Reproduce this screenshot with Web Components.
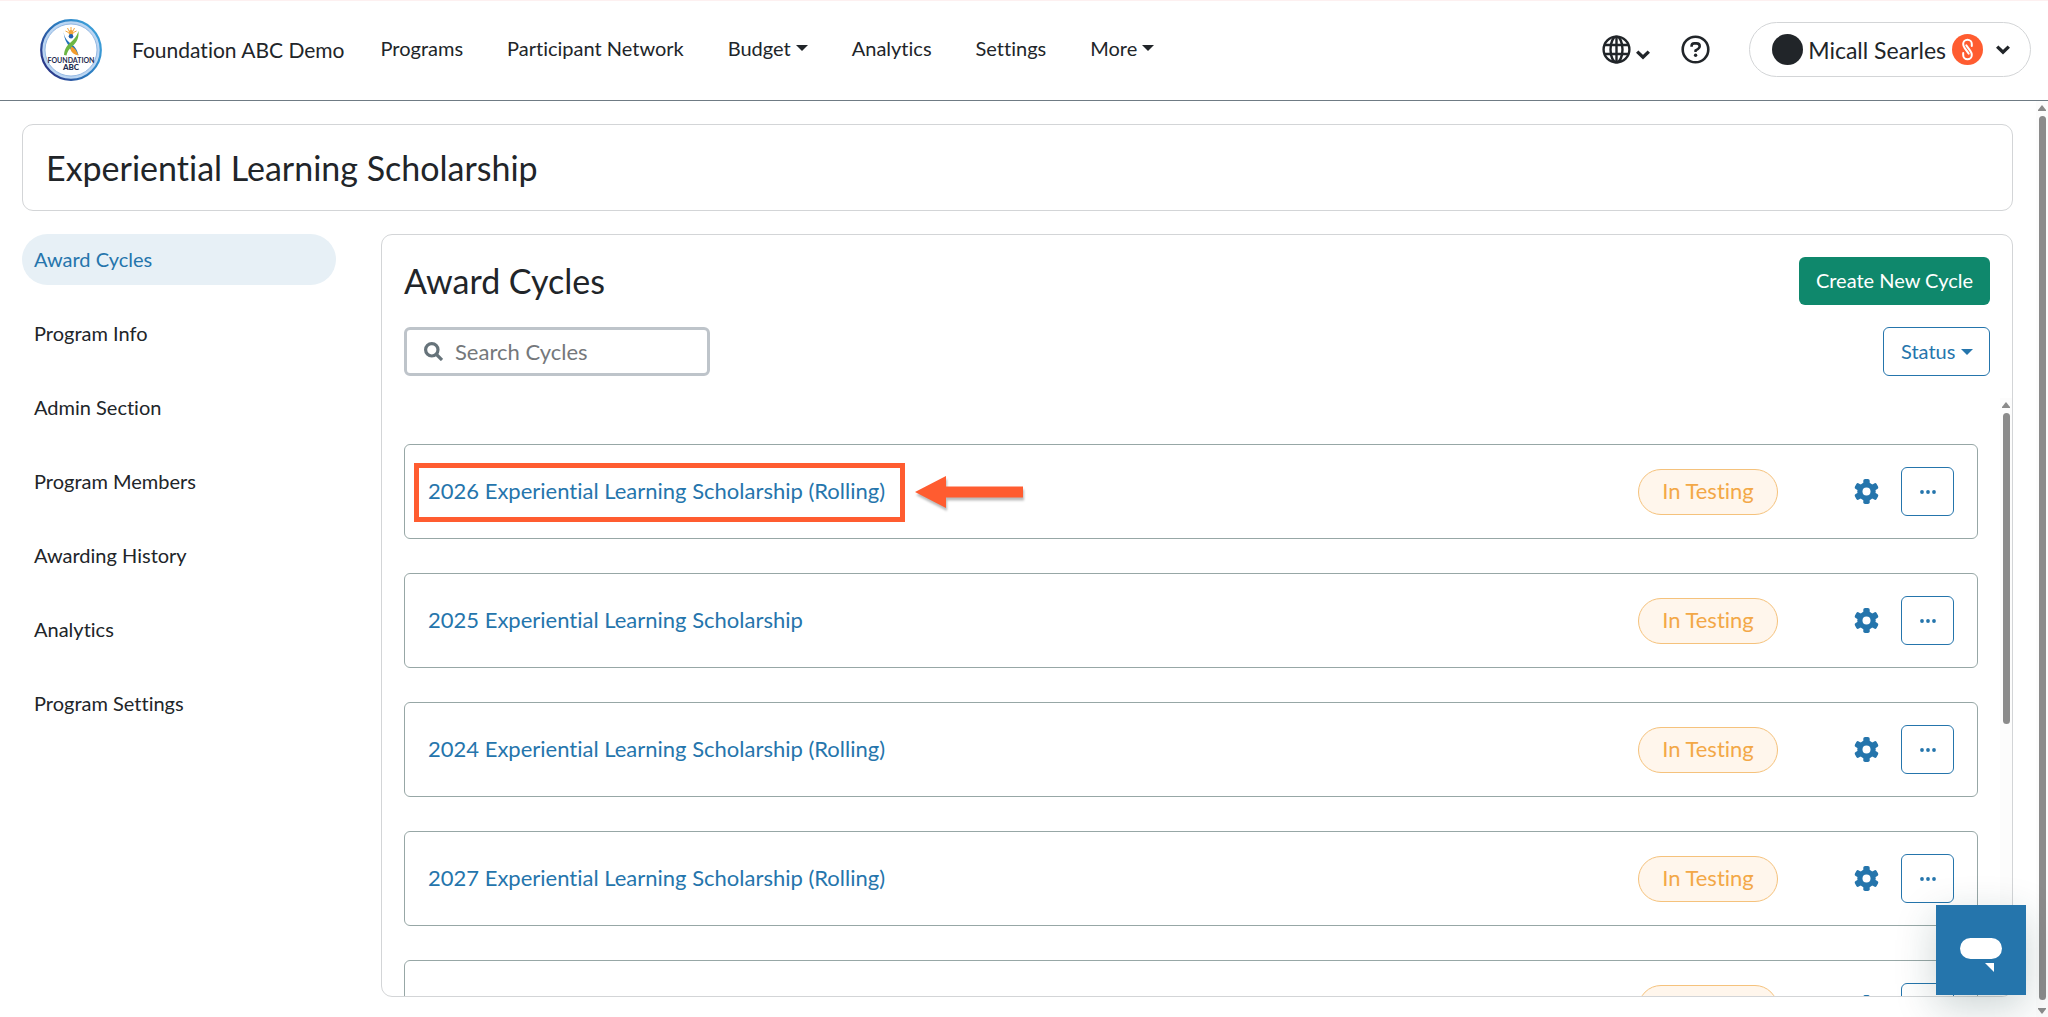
<!DOCTYPE html>
<html lang="en">
<head>
<meta charset="utf-8">
<title>Experiential Learning Scholarship</title>
<style>
  :root {
    --ink: #212529;
    --blue: #2575ac;
    --line: #d3d5d7;
    --accent: #ff5c30;
  }
  html, body { height: 100%; margin: 0; }
  body { font: 20px/30px Lato, "Liberation Sans", sans-serif; font-variant-ligatures: none; color: var(--ink); background: #fff; }
</style>
</head>
<body>
<app-shell>
  <app-header slot="header" brand="Foundation ABC Demo" user="Micall Searles">
    <top-link>Programs</top-link>
    <top-link>Participant Network</top-link>
    <top-link menu>Budget</top-link>
    <top-link>Analytics</top-link>
    <top-link>Settings</top-link>
    <top-link menu>More</top-link>
  </app-header>
  <page-title slot="title">Experiential Learning Scholarship</page-title>
  <side-nav slot="side">
    <side-link current>Award Cycles</side-link>
    <side-link>Program Info</side-link>
    <side-link>Admin Section</side-link>
    <side-link>Program Members</side-link>
    <side-link>Awarding History</side-link>
    <side-link>Analytics</side-link>
    <side-link>Program Settings</side-link>
  </side-nav>
  <cycle-panel heading="Award Cycles">
    <cycle-row status="In Testing" marked>2026 Experiential Learning Scholarship (Rolling)</cycle-row>
    <cycle-row status="In Testing">2025 Experiential Learning Scholarship</cycle-row>
    <cycle-row status="In Testing">2024 Experiential Learning Scholarship (Rolling)</cycle-row>
    <cycle-row status="In Testing">2027 Experiential Learning Scholarship (Rolling)</cycle-row>
    <cycle-row status=""></cycle-row>
  </cycle-panel>
  <chat-launcher slot="chat"></chat-launcher>
</app-shell>

<script>
const define = (name, render) => customElements.define(name, class extends HTMLElement {
  constructor() {
    super();
    this.attachShadow({ mode: 'open' });
  }
  connectedCallback() {
    this.shadowRoot.innerHTML = `<style>
      *, :host { box-sizing: border-box; }
      a { color: inherit; text-decoration: none; }
      button, input, select { font: inherit; font-variant-ligatures: none; color: inherit; margin: 0; padding: 0; border: 0; background: none; }
      button, select { cursor: pointer; }
      svg { display: block; flex: none; }
    </style>` + render(this);
  }
});

const chevron = `<svg width="14" height="10" viewBox="0 0 14 10" fill="none" stroke="#212529" stroke-width="3.4"><path d="M1.2 1.6 7 7.2l5.8-5.6"/></svg>`;

define('app-shell', () => `
  <style>
    :host { display: flex; flex-direction: column; height: 100vh; overflow: hidden; }
    .body { display: flex; flex: 1; min-height: 0; }
    main { display: flex; flex-direction: column; gap: 23px; flex: 1; min-width: 0; padding: 23px 23px 20px 22px; }
    .columns { display: flex; gap: 45px; flex: 1; min-height: 0; }
  </style>
  <slot name="header"></slot>
  <div class="body">
    <main>
      <slot name="title"></slot>
      <div class="columns"><slot name="side"></slot><slot></slot></div>
    </main>
    <scroll-rail style="--thumb: 1"></scroll-rail>
  </div>
  <slot name="chat"></slot>`);

define('scroll-rail', () => `
  <style>
    :host { display: flex; flex-direction: column; align-items: center; gap: 5px; width: 12px; flex: none; padding: 4px 0 3px; background: #fcfcfc; }
    .track { flex: 1; width: 7px; display: flex; flex-direction: column; }
    .thumb { flex: var(--thumb) 1 0; border-radius: 4px; background: #8b8b8b; }
    .down { padding-top: 3px; }
  </style>
  <svg width="8" height="6" viewBox="0 0 8 6"><path d="M4 0 8 5v1H0V5z" fill="#8b8b8b"/></svg>
  <div class="track"><div class="thumb"></div></div>
  <div class="down"><svg width="8" height="6" viewBox="0 0 8 6"><path d="M4 6 0 1V0h8v1z" fill="#8b8b8b"/></svg></div>`);

define('brand-logo', () => `
  <style>:host { display: block; }</style>
  <svg width="62" height="62" viewBox="0 0 62 62" role="img" aria-label="Foundation ABC logo">
    <defs>
      <linearGradient id="ring" x1="0.1" y1="0.8" x2="0.9" y2="0.3"><stop offset="0" stop-color="#2b3a8a"/><stop offset=".5" stop-color="#2a76bb"/><stop offset="1" stop-color="#3a9bd6"/></linearGradient>
    </defs>
    <circle cx="31" cy="31" r="28" fill="#fff" stroke="#bcd6f2" stroke-width="4"/>
    <circle cx="31" cy="31" r="29.8" fill="none" stroke="url(#ring)" stroke-width="2.2"/>
    <circle cx="31" cy="31" r="26" fill="none" stroke="#7fa9dc" stroke-width=".8"/>
    <g stroke="#f2a53a" stroke-width="1"><path d="M31 8v4M27.500 9l1.500 3M34.500 9 33 12M25.500 12l3 1.500M36.500 12l-3 1.500"/></g>
    <circle cx="31" cy="13.5" r="2.5" fill="#f2a53a"/>
    <circle cx="31" cy="17.2" r="2.3" fill="#1f5fae"/>
    <path d="M23.500 10.500c0 7 3 11 8 14.500 4 3 5.500 6 7 11-4-1-7-3-8-6-1.500-4-7-8-7-19.500z" fill="#2273bd"/>
    <path d="M31 27c4 2 6 5 7.500 9.500-4-.5-7-3-8-6z" fill="#f39c2c"/>
    <path d="M38.500 12c.500 7-1.500 11-5.500 14.500-4 3.500-5.500 6-6.500 10l-2.500-.5c.5-5.500 2-8.500 6.500-12.500 4-3.500 6-6 8-11.500z" fill="#6cb644"/>
    <text x="31" y="44" text-anchor="middle" font-family="Lato" font-weight="700" font-size="7" fill="#1f2c50">FOUNDATION</text>
    <text x="31" y="51" text-anchor="middle" font-family="Lato" font-weight="900" font-size="8" fill="#1f2c50">ABC</text>
  </svg>`);

define('app-header', el => `
  <style>
    :host { display: block; flex: none; background: #fff; box-shadow: inset 0 1px #fdf0f0; border-bottom: 1px solid #6f7b84; }
    header { display: flex; align-items: center; height: 100px; padding: 0 17px 1px 40px; }
    .brand { display: flex; align-items: center; gap: 30px; font-size: 21px; white-space: nowrap; }
    nav { display: flex; align-items: center; gap: 44px; margin-left: 36px; padding-bottom: 4px; }
    .tools { display: flex; align-items: center; margin-left: auto; }
    .lang { display: flex; align-items: center; gap: 5px; margin-right: 31px; }
    .lang svg + svg { margin-top: 10px; }
    .help { margin-right: 39px; }
    .user { display: flex; align-items: center; height: 55px; padding: 0 20px 0 22px; border: 1px solid var(--line); border-radius: 28px; font-size: 23px; white-space: nowrap; }
    .avatar { width: 31px; height: 31px; border-radius: 50%; background: var(--ink); margin-right: 5px; }
    .badge { margin: 0 13px 0 6px; }
  </style>
  <header>
    <a class="brand" href="#"><brand-logo></brand-logo><span>${el.getAttribute('brand')}</span></a>
    <nav aria-label="Main"><slot></slot></nav>
    <div class="tools">
      <button class="lang" aria-label="Language">
        <svg width="29" height="29" viewBox="0 0 29 29" fill="none" stroke="#212529" stroke-width="2.4"><circle cx="14.5" cy="14.5" r="12.9"/><ellipse cx="14.5" cy="14.5" rx="6" ry="12.9"/><path d="M14.500 1.500v26M2.500 10h24M2.500 19h24"/></svg>
        ${chevron}
      </button>
      <button class="help" aria-label="Help">
        <svg width="29" height="29" viewBox="0 0 29 29" fill="none" stroke="#212529" stroke-width="2.6"><circle cx="14.5" cy="14.5" r="12.8"/><path d="M10.600 11.800V11c0-1.600 1.200-2.600 2.700-2.600h2.300c1.800 0 3.100 1.300 3.100 2.900 0 1.300-.7 2.100-1.700 2.700l-2.400 1.400v1.500"/><circle cx="14.6" cy="20.2" r="1.7" fill="#212529" stroke="none"/></svg>
      </button>
      <button class="user">
        <span class="avatar"></span><span>${el.getAttribute('user')}</span>
        <svg class="badge" width="31" height="31" viewBox="0 0 31 31"><circle cx="15.5" cy="15.5" r="15.5" fill="#ff5c30"/><g fill="none" stroke="#fff" stroke-width="2" stroke-linecap="round" stroke-linejoin="round"><path d="M19.800 12V10a4.300 4.300 0 0 0-8.600 0c0 1.800.5 2.800 1.500 4.200l4 5.500"/><path d="M11.200 19v2a4.300 4.300 0 0 0 8.600 0c0-1.800-.5-2.800-1.500-4.200l-4-5.500"/></g></svg>
        ${chevron}
      </button>
    </div>
  </header>`);

define('top-link', el => {
  const menu = el.hasAttribute('menu');
  const tag = menu ? 'button' : 'a href="#"';
  return `
  <style>
    :host { display: block; white-space: nowrap; }
    a, button { display: flex; align-items: center; gap: 5px; line-height: 30px; }
  </style>
  <${tag}><slot></slot>${menu ? `<svg width="12" height="6" viewBox="0 0 12 6"><path d="M0 0h12L6 6z" fill="#212529"/></svg>` : ''}</${menu ? 'button' : 'a'}>`;
});

define('page-title', () => `
  <style>
    :host { display: block; flex: none; border: 1px solid var(--line); border-radius: 11px; padding: 21px 23px; }
    h1 { margin: 0; font-size: 34px; line-height: 43px; font-weight: 400; }
  </style>
  <h1><slot></slot></h1>`);

define('side-nav', () => `
  <style>
    :host { display: block; width: 314px; flex: none; }
    nav { display: flex; flex-direction: column; gap: 23px; }
  </style>
  <nav aria-label="Program"><slot></slot></nav>`);

define('side-link', () => `
  <style>
    :host { display: block; }
    a { display: block; padding: 10px 12px 11px; border-radius: 26px; }
    :host([current]) a { background: #e7f0f6; color: var(--blue); }
  </style>
  <a href="#"><slot></slot></a>`);

define('cycle-panel', el => `
  <style>
    :host { display: flex; flex-direction: column; flex: 1; min-width: 0; gap: 22px; border: 1px solid var(--line); border-radius: 11px; overflow: hidden; padding-top: 22px; }
    .bar { display: flex; align-items: center; justify-content: space-between; flex: none; padding: 0 22px; }
    h2 { margin: 0; font-size: 34px; line-height: 48px; font-weight: 400; }
    .create { height: 48px; padding: 0 17px 2px; border-radius: 6px; background: #0f886c; color: #fff; }
    .search { display: flex; align-items: center; gap: 12px; width: 306px; height: 49px; padding: 0 17px; border: 3px solid #bec4ca; border-radius: 6px; }
    input { flex: 1; min-width: 0; font-size: 22px; line-height: 30px; outline: 0; }
    input::placeholder { color: #75787b; opacity: 1; }
    .status { display: grid; align-items: center; color: var(--blue); }
    .status > * { grid-area: 1 / 1; }
    .status svg { justify-self: end; margin-right: 17px; pointer-events: none; }
    select { appearance: none; height: 49px; padding: 0 33px 2px 17px; border: 1px solid var(--blue); border-radius: 6px; }
    .scroll { display: flex; gap: 22px; flex: 1; min-height: 0; padding-left: 22px; }
    .list { display: flex; flex-direction: column; gap: 34px; flex: 1; min-width: 0; padding-top: 46px; overflow: hidden; }
    .rail { display: flex; flex: none; overflow: hidden; }
  </style>
  <div class="bar"><h2>${el.getAttribute('heading')}</h2><button class="create">Create New Cycle</button></div>
  <div class="bar">
    <label class="search">
      <svg width="19" height="19" viewBox="0 0 19 19" fill="none" stroke="#66737a" stroke-width="3.2"><circle cx="7.8" cy="7.8" r="6.2"/><path d="m12 12 6 6"/></svg>
      <input type="text" placeholder="Search Cycles" aria-label="Search Cycles">
    </label>
    <label class="status">
      <select aria-label="Status"><option>Status</option></select>
      <svg width="12" height="6" viewBox="0 0 12 6"><path d="M0 0h12L6 6z" fill="#2575ac"/></svg>
    </label>
  </div>
  <div class="scroll">
    <div class="list"><slot></slot></div>
    <div class="rail"><scroll-rail style="--thumb: 0.55"></scroll-rail></div>
  </div>`);

define('status-pill', () => `
  <style>
    :host { display: flex; align-items: center; justify-content: center; width: 140px; height: 46px; padding-bottom: 1px; border: 1px solid #f5c27c; border-radius: 23px; background: #fff6ec; color: #f3a847; font-size: 22px; white-space: nowrap; }
  </style>
  <slot></slot>`);

define('cycle-row', el => `
  <style>
    :host { display: flex; align-items: center; flex: none; height: 95px; padding: 0 23px; border: 1px solid #97a7a6; border-radius: 6px; }
    .title { position: relative; padding-bottom: 2px; color: var(--blue); font-size: 22px; white-space: nowrap; }
    .mark { position: absolute; inset: -13px -20px -14px -14px; border: 5px solid var(--accent); pointer-events: none; }
    .arrow { position: absolute; left: calc(100% + 30px); top: 0; filter: drop-shadow(1px 3px 1px #0004); }
    .actions { display: flex; align-items: center; margin-left: auto; }
    .gear { margin: 0 22px 0 76px; }
    .more { display: flex; align-items: center; justify-content: center; width: 53px; height: 49px; border: 1px solid var(--blue); border-radius: 6px; }
  </style>
  <div class="title"><a href="#"><slot></slot></a>
    ${el.hasAttribute('marked') ? `<span class="mark"></span>
    <svg class="arrow" width="108" height="32" viewBox="0 0 108 32"><path d="M0 16 31 0v10.500h77v11H31V32z" fill="#ff5c30"/></svg>` : ''}
  </div>
  <div class="actions">
    <status-pill>${el.getAttribute('status')}</status-pill>
    <button class="gear" aria-label="Settings">
      <svg width="25" height="25" viewBox="-12.5 -12.5 25 25"><g fill="#2575ac"><circle r="9.2"/><rect x="-3.2" y="-12.5" width="6.4" height="25" rx="1.8"/><rect x="-3.2" y="-12.5" width="6.4" height="25" rx="1.8" transform="rotate(60)"/><rect x="-3.2" y="-12.5" width="6.4" height="25" rx="1.8" transform="rotate(120)"/></g><circle r="4" fill="#fff"/></svg>
    </button>
    <button class="more" aria-label="More actions">
      <svg width="16" height="4" viewBox="0 0 16 4" fill="#2575ac"><circle cx="2" cy="2" r="1.9"/><circle cx="8" cy="2" r="1.9"/><circle cx="14" cy="2" r="1.9"/></svg>
    </button>
  </div>`);

define('chat-launcher', () => `
  <style>
    :host { position: fixed; right: 22px; bottom: 22px; }
    button { display: flex; align-items: center; justify-content: center; width: 90px; height: 90px; padding-top: 9px; background: var(--blue); box-shadow: 0 12px 40px rgba(20, 60, 60, .22); }
  </style>
  <button aria-label="Open chat">
    <svg width="42" height="34" viewBox="0 0 42 34" fill="#fff"><rect width="42" height="21" rx="10.5"/><path d="M25 25h9v9z"/></svg>
  </button>`);
</script>
</body>
</html>
